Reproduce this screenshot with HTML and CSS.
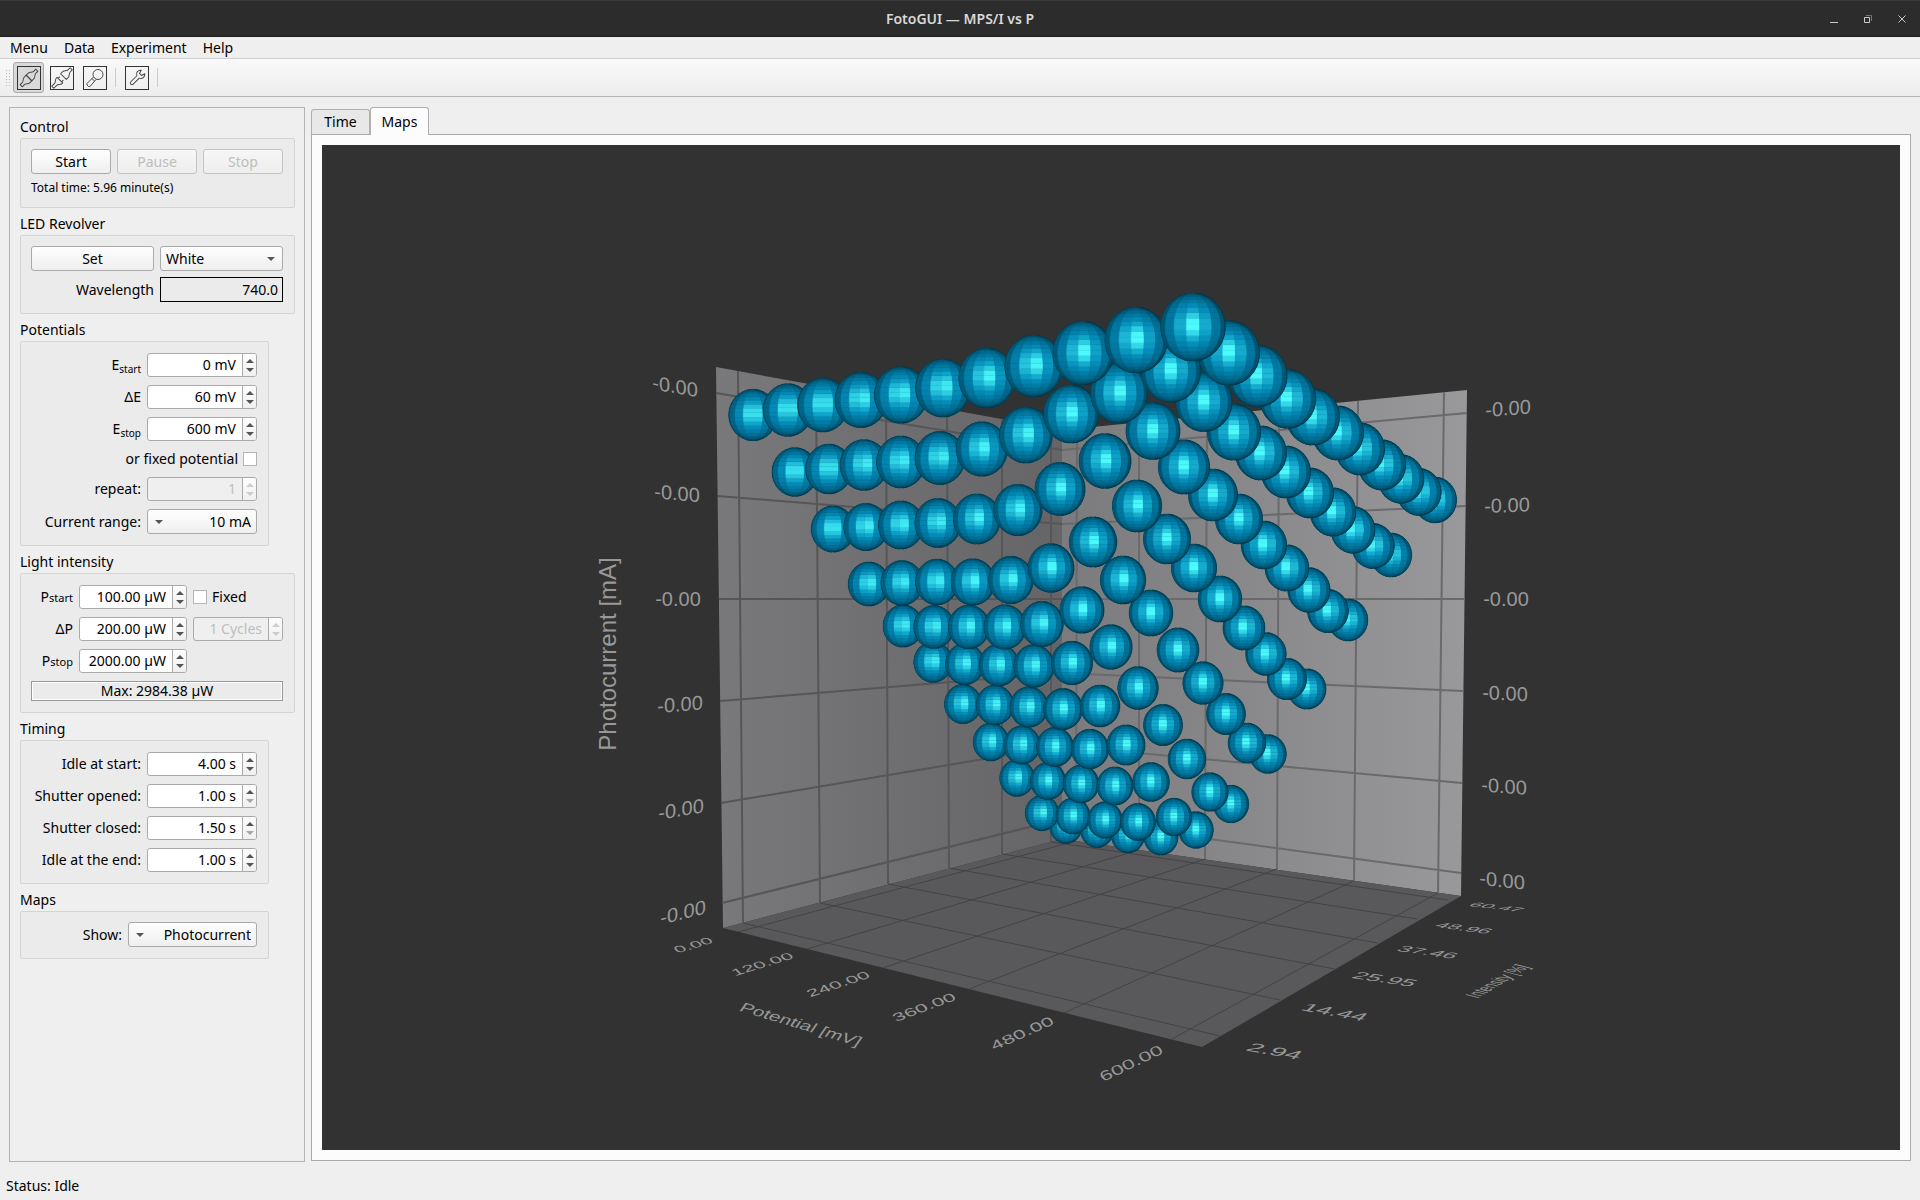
FILE: index.html
```html
<!DOCTYPE html>
<html lang="en">

<head>
    <meta charset="UTF-8">
    <meta name="viewport" content="width=device-width, initial-scale=1.0">
    <title>FotoGUI — MPS/I vs P</title>
    <link rel="stylesheet" href="styles.css">
</head>

<body>
    <header class="titlebar">
        <h1 class="titlebar-text">FotoGUI — MPS/I vs P</h1>
        <div class="window-buttons">
            <button type="button" aria-label="Minimize"><svg viewBox="0 0 10 10"><path d="M1 8.5h8" /></svg></button>
            <button type="button" aria-label="Restore"><svg viewBox="0 0 10 10"><path d="M1.5 3.5h5v5h-5z" /><path class="dim" d="M3 1.5h5.500v5.500" /></svg></button>
            <button type="button" aria-label="Close"><svg viewBox="0 0 10 10"><path d="M1.500 1.500l7 7M8.500 1.500l-7 7" /></svg></button>
        </div>
    </header>

    <nav class="menubar">
        <button type="button">Menu</button>
        <button type="button">Data</button>
        <button type="button">Experiment</button>
        <button type="button">Help</button>
    </nav>

    <div class="toolbar">
        <span class="handle"></span>
        <button type="button" class="tool checked" aria-label="Connect">
            <svg viewBox="0 0 24 24">
                <rect x="0.500" y="0.500" width="23" height="23" />
                <g class="glyph" transform="translate(12 12) rotate(-45)">
                    <path d="M0 -4H-3C-5 -4 -6 -1.500 -8 -1.500H-11V1.500H-8C-6 1.500 -5 4 -3 4H0z" />
                    <path d="M0 -4H3C5 -4 6 -1.500 8 -1.500H11V1.500H8C6 1.500 5 4 3 4H0z" />
                </g>
            </svg>
        </button>
        <button type="button" class="tool" aria-label="Disconnect">
            <svg viewBox="0 0 24 24">
                <rect x="0.500" y="0.500" width="23" height="23" />
                <g class="glyph" transform="translate(12 12) rotate(-45)">
                    <path d="M-3 -4H-4C-6 -4 -7 -1.500 -9 -1.500H-13V1.500H-9C-7 1.500 -6 4 -4 4H-3zM-3 -2.500H-0.500M-3 2.500H-0.500" />
                    <path d="M2 -4H5C7 -4 8 -1.500 10 -1.500H13V1.500H10C8 1.500 7 4 5 4H2z" />
                </g>
            </svg>
        </button>
        <button type="button" class="tool" aria-label="Find">
            <svg viewBox="0 0 24 24">
                <rect x="0.500" y="0.500" width="23" height="23" />
                <circle class="glyph" cx="15" cy="8.500" r="5" />
                <path class="glyph" d="M10.500 11l-6.500 6.500v1.500l1.500 1.500h1.500l6-7M9 12.500l2.500 2.500" />
            </svg>
        </button>
        <span class="divider"></span>
        <button type="button" class="tool" aria-label="Settings">
            <svg viewBox="0 0 24 24">
                <rect x="0.500" y="0.500" width="23" height="23" />
                <g class="glyph" transform="translate(12 12) rotate(-45)">
                    <path d="M1.500 -1.700H-7A1.700 1.700 0 0 0 -7 1.700H1.500A4 4 0 0 0 8.500 2.500L5 1.500V-1.500L8.500 -2.500A4 4 0 0 0 1.500 -1.700z" />
                </g>
            </svg>
        </button>
        <span class="divider"></span>
    </div>

    <main class="workspace">
        <form class="sidebar">
            <section class="group">
                <h2>Control</h2>
                <div class="group-box wide">
                    <div class="row">
                        <button type="button" class="btn">Start</button>
                        <button type="button" class="btn" disabled>Pause</button>
                        <button type="button" class="btn" disabled>Stop</button>
                    </div>
                    <p class="note">Total time: 5.96 minute(s)</p>
                </div>
            </section>

            <section class="group">
                <h2>LED Revolver</h2>
                <div class="group-box wide halves">
                    <button type="button" class="btn">Set</button>
                    <div class="combo">
                        <select aria-label="LED">
                            <option>White</option>
                        </select>
                    </div>
                    <label for="wavelength">Wavelength</label>
                    <input class="readout" id="wavelength" type="text" value="740.0" readonly>
                </div>
            </section>

            <section class="group">
                <h2>Potentials</h2>
                <div class="group-box fields">
                    <label for="e-start">E<sub>start</sub></label>
                    <div class="spin"><input id="e-start" type="text" value="0 mV"><span class="steps"><button type="button" aria-label="Up"></button><button type="button" aria-label="Down"></button></span></div>
                    <label for="e-delta">ΔE</label>
                    <div class="spin"><input id="e-delta" type="text" value="60 mV"><span class="steps"><button type="button" aria-label="Up"></button><button type="button" aria-label="Down"></button></span></div>
                    <label for="e-stop">E<sub>stop</sub></label>
                    <div class="spin"><input id="e-stop" type="text" value="600 mV"><span class="steps"><button type="button" aria-label="Up"></button><button type="button" aria-label="Down"></button></span></div>
                    <div class="check full">
                        <label for="fixed-potential">or fixed potential</label>
                        <input id="fixed-potential" type="checkbox">
                    </div>
                    <label for="repeat">repeat:</label>
                    <div class="spin off"><input id="repeat" type="text" value="1" disabled><span class="steps"><button type="button" aria-label="Up" disabled></button><button type="button" aria-label="Down" disabled></button></span></div>
                    <label for="range">Current range:</label>
                    <div class="combo reversed">
                        <select id="range">
                            <option>10 mA</option>
                        </select>
                    </div>
                </div>
            </section>

            <section class="group">
                <h2>Light intensity</h2>
                <div class="group-box wide light">
                    <label for="p-start">P<small>start</small></label>
                    <div class="spin"><input id="p-start" type="text" value="100.00 µW"><span class="steps"><button type="button" aria-label="Up"></button><button type="button" aria-label="Down"></button></span></div>
                    <div class="check">
                        <input id="fixed-light" type="checkbox">
                        <label for="fixed-light">Fixed</label>
                    </div>
                    <label for="p-delta">ΔP</label>
                    <div class="spin"><input id="p-delta" type="text" value="200.00 µW"><span class="steps"><button type="button" aria-label="Up"></button><button type="button" aria-label="Down"></button></span></div>
                    <div class="spin off"><input type="text" value="1 Cycles" aria-label="Cycles" disabled><span class="steps"><button type="button" aria-label="Up" disabled></button><button type="button" aria-label="Down" disabled></button></span></div>
                    <label for="p-stop">P<small>stop</small></label>
                    <div class="spin"><input id="p-stop" type="text" value="2000.00 µW"><span class="steps"><button type="button" aria-label="Up"></button><button type="button" aria-label="Down"></button></span></div>
                    <output class="max">Max: 2984.38 µW</output>
                </div>
            </section>

            <section class="group">
                <h2>Timing</h2>
                <div class="group-box fields">
                    <label for="idle-start">Idle at start:</label>
                    <div class="spin"><input id="idle-start" type="text" value="4.00 s"><span class="steps"><button type="button" aria-label="Up"></button><button type="button" aria-label="Down"></button></span></div>
                    <label for="opened">Shutter opened:</label>
                    <div class="spin"><input id="opened" type="text" value="1.00 s"><span class="steps"><button type="button" aria-label="Up"></button><button type="button" aria-label="Down" class="faded"></button></span></div>
                    <label for="closed">Shutter closed:</label>
                    <div class="spin"><input id="closed" type="text" value="1.50 s"><span class="steps"><button type="button" aria-label="Up"></button><button type="button" aria-label="Down" class="faded"></button></span></div>
                    <label for="idle-end">Idle at the end:</label>
                    <div class="spin"><input id="idle-end" type="text" value="1.00 s"><span class="steps"><button type="button" aria-label="Up"></button><button type="button" aria-label="Down"></button></span></div>
                </div>
            </section>

            <section class="group">
                <h2>Maps</h2>
                <div class="group-box show">
                    <label for="show">Show:</label>
                    <div class="combo reversed">
                        <select id="show">
                            <option>Photocurrent</option>
                        </select>
                    </div>
                </div>
            </section>
        </form>

        <section class="viewer">
            <div class="tabs" role="tablist">
                <button type="button" class="tab" role="tab" aria-selected="false">Time</button>
                <button type="button" class="tab active" role="tab" aria-selected="true">Maps</button>
            </div>
            <div class="pane">
                <svg class="scene" id="scene" viewBox="322 145 1578 1005">
                    <defs>
                        <linearGradient id="wall-left" x1="0" x2="1">
                            <stop offset="0" stop-color="#79797b" />
                            <stop offset="1" stop-color="#656567" />
                        </linearGradient>
                        <linearGradient id="wall-right" x1="0" x2="1">
                            <stop offset="0" stop-color="#7b7b7d" />
                            <stop offset="1" stop-color="#99999b" />
                        </linearGradient>
                        <g id="balls"></g>
                    </defs>
                    <polygon fill="url(#wall-left)" points="716,367 1062,430 1062,839 723,928" />
                    <polygon fill="url(#wall-right)" points="1062,430 1467,390 1461,896 1062,839" />
                    <polygon fill="#59595b" points="723,928 1062,839 1461,896 1202,1047" />
                    <path class="grid-left" d="M738 371L743 923M816 385L820 903M886 398L888 884M947 409L949 868M1002 419L1002 854M1051 428L1051 842
                        M716 393L1062 450M718 496L1062 524M719 599H1062M720 701L1062 673M721 803L1062 746M722 903L1062 819" />
                    <path class="grid-right" d="M1077 429L1076 841M1139 423L1139 850M1207 416L1205 859M1279 409L1277 869M1358 401L1354 881M1444 392L1438 893
                        M1062 450L1467 413M1062 524L1466 506M1062 599H1465M1062 673L1463 691M1062 746L1462 783M1062 819L1461 873" />
                    <path class="grid-floor" d="M743 923L1220 1036M820 903L1280 1000M888 884L1335 969M949 868L1378 943M1002 854L1417 919M1051 842L1448 900
                        M738 932L1076 841M807 949L1139 850M883 968L1205 859M969 989L1277 869M1064 1013L1354 881M1172 1039L1438 893" />
                    <g id="labels" class="labels"></g>
                    <g id="points"></g>
                </svg>
            </div>
        </section>
    </main>

    <footer class="statusbar">Status: Idle</footer>

    <script src="scene.js"></script>
</body>

</html>
```

FILE: styles.css
```css
* {
    margin: 0;
    padding: 0;
    box-sizing: border-box;
}

body {
    display: flex;
    flex-direction: column;
    min-height: 100vh;
    background-color: #efefef;
    color: #000;
    font-family: "Noto Sans", "Open Sans", sans-serif;
    font-size: 14px;
    line-height: 20px;
}

button,
input,
select {
    font: inherit;
    color: inherit;
}

/* Title bar */
.titlebar {
    display: grid;
    grid-template-columns: 1fr auto 1fr;
    align-items: center;
    height: 37px;
    background-color: #2c2c2c;
    border-top: 1px solid #3c3c3c;
    border-bottom: 1px solid #1c1c1c;
}

.titlebar-text {
    grid-column: 2;
    color: #d8d8d8;
    font-size: 14px;
    font-weight: 600;
}

.window-buttons {
    display: flex;
    justify-content: flex-end;
    gap: 14px;
    padding-right: 8px;
}

.window-buttons button {
    width: 20px;
    height: 20px;
    padding: 5px;
    border: none;
    background: none;
}

.window-buttons svg {
    display: block;
    width: 10px;
    height: 10px;
    fill: none;
    stroke: #ccc;
}

.window-buttons .dim {
    stroke: #777;
}

/* Menu */
.menubar {
    display: flex;
    gap: 16px;
    padding: 0 10px;
    height: 22px;
    border-bottom: 1px solid #d0d0d0;
}

.menubar button {
    border: none;
    background: none;
    line-height: 21px;
}

/* Toolbar */
.toolbar {
    display: flex;
    align-items: center;
    gap: 2px;
    height: 38px;
    padding-left: 5px;
    border-bottom: 1px solid #b4b4b4;
    background: linear-gradient(#f9f9f9, #ededed);
}

.handle {
    width: 6px;
    height: 17px;
    background: radial-gradient(circle, #bbb 1px, transparent 1px) 0 0 / 3px 3px;
}

.tool {
    width: 31px;
    height: 31px;
    padding: 3px;
    border: 1px solid transparent;
    border-radius: 3px;
    background: none;
}

.tool.checked {
    border-color: #aaa;
    background-color: #d9d9d9;
}

.tool svg {
    display: block;
    width: 24px;
    height: 24px;
    fill: none;
    stroke: #333;
}

.tool .glyph {
    stroke: #4a4a4a;
    stroke-linejoin: round;
}

.divider {
    width: 1px;
    height: 19px;
    margin: 0 3px;
    background-color: #ccc;
}

/* Layout */
.workspace {
    display: flex;
    flex: 1;
    gap: 6px;
    padding: 10px 9px 0;
}

.sidebar {
    flex: none;
    width: 296px;
    padding: 8px 9px 8px 10px;
    border: 1px solid #b4b4b4;
}

.group {
    margin-bottom: 5px;
}

.group h2 {
    font-size: 14px;
    font-weight: normal;
    line-height: 22px;
}

.group-box {
    width: 249px;
    padding: 11px;
    border: 1px solid #d4d4d4;
    border-radius: 2px;
    background-color: #ebebeb;
}

.group-box.wide {
    width: 275px;
    padding: 10px 11px 11px 10px;
}

.row {
    display: flex;
    gap: 6px;
}

.row .btn {
    flex: 1;
}

.note {
    margin-top: 6px;
    font-size: 12px;
    line-height: 16px;
}

.halves {
    display: grid;
    grid-template-columns: 1fr 1fr;
    align-items: center;
    gap: 6px;
}

.group-box label {
    text-align: right;
    line-height: 20px;
    white-space: nowrap;
}

.fields {
    display: grid;
    grid-template-columns: 1fr 110px;
    align-items: center;
    gap: 8px 6px;
}

.full {
    grid-column: 1 / -1;
    justify-content: flex-end;
}

.group-box.light {
    display: grid;
    grid-template-columns: 42px 108px 1fr;
    align-items: center;
    gap: 8px 6px;
    padding-top: 11px;
}

.max {
    grid-column: 1 / -1;
    height: 20px;
    border: 1px solid #999;
    outline: 1px solid #fff;
    outline-offset: -2px;
    line-height: 18px;
    text-align: center;
}

.group-box.show {
    display: grid;
    grid-template-columns: 1fr 129px;
    align-items: center;
    gap: 6px;
    padding-top: 10px;
}

sub {
    font-size: 10px;
    line-height: 0;
    vertical-align: -3px;
}

small {
    font-size: 11px;
}

/* Controls */
.btn {
    height: 25px;
    border: 1px solid #aaa;
    border-radius: 3px;
    background: linear-gradient(#fefefe, #efefef);
    line-height: 23px;
}

.btn:disabled {
    border-color: #c4c4c4;
    background: linear-gradient(#f6f6f6, #eee);
    color: #bebebe;
}

.combo {
    position: relative;
    height: 25px;
}

.combo select {
    display: block;
    width: 100%;
    height: 25px;
    padding: 0 5px;
    border: 1px solid #aaa;
    border-radius: 3px;
    background: linear-gradient(#fefefe, #efefef);
    appearance: none;
}

.combo::after {
    content: "";
    position: absolute;
    top: 11px;
    right: 8px;
    border: 4px solid transparent;
    border-top-color: #555;
    border-bottom: none;
    pointer-events: none;
}

.combo.reversed::after {
    right: auto;
    left: 8px;
}

.combo.reversed select {
    text-align-last: right;
}

.readout {
    width: 100%;
    height: 25px;
    padding: 0 4px;
    border: 1px solid #000;
    background-color: #ebebeb;
    text-align: right;
}

.spin {
    display: flex;
    height: 24px;
    border: 1px solid #aaa;
    border-radius: 3px;
    background-color: #fff;
    overflow: hidden;
}

.spin input {
    flex: 1;
    min-width: 0;
    padding-right: 6px;
    border: none;
    background: none;
    text-align: right;
}

.steps {
    display: flex;
    flex-direction: column;
    justify-content: center;
    gap: 5px;
    width: 14px;
    border-left: 1px solid #aaa;
    background: linear-gradient(#fdfdfd, #f0f0f0);
}

.steps button {
    align-self: center;
    width: 8px;
    height: 4px;
    border: 4px solid transparent;
    border-top-width: 0;
    border-bottom-color: #555;
    background: none;
}

.steps button:last-child {
    border-width: 4px 4px 0;
    border-top-color: #555;
}

.steps .faded {
    opacity: 0.5;
}

.spin.off {
    background-color: #efefef;
    color: #bebebe;
}

.spin.off .steps button {
    opacity: 0.25;
}

.check {
    display: flex;
    align-items: center;
    gap: 5px;
    height: 20px;
}

.check input {
    width: 14px;
    height: 14px;
    border: 1px solid #b4b4b4;
    background-color: #fff;
    appearance: none;
}

/* Tabs and the 3D map */
.viewer {
    display: flex;
    flex: 1;
    flex-direction: column;
    min-width: 0;
    margin-bottom: 1px;
}

.tabs {
    display: flex;
    align-items: flex-end;
    height: 27px;
}

.tab {
    width: 59px;
    height: 25px;
    border: 1px solid #b0b0b0;
    border-bottom: none;
    border-radius: 3px 3px 0 0;
    background-color: #e8e8e8;
}

.tab.active {
    z-index: 1;
    height: 28px;
    margin-bottom: -1px;
    background-color: #fcfcfc;
}

.pane {
    display: flex;
    flex: 1;
    padding: 10px;
    border: 1px solid #aaa;
    background-color: #fcfcfc;
}

.scene {
    flex: 1;
    width: 100%;
    min-width: 0;
    background-color: #323232;
}

.grid-left,
.grid-right,
.grid-floor {
    fill: none;
    stroke: #565658;
    stroke-width: 2;
}

.grid-right {
    stroke: #6a6a6c;
}

.grid-floor {
    stroke: #444446;
    stroke-width: 1;
}

.labels {
    fill: #989898;
    font-family: "Liberation Sans", Arial, sans-serif;
    font-size: 20px;
    text-anchor: middle;
}

.labels .axis-title {
    font-size: 24px;
}

/* Status bar */
.statusbar {
    height: 39px;
    padding: 14px 6px 5px;
}
```

FILE: scene.js
```js
const SVG = 'http://www.w3.org/2000/svg';

// Sphere centres, one line per light intensity, start to stop potential
const points = [
    [[753, 415], [788, 410], [823, 405], [861, 400], [901, 395], [943, 388], [987, 378], [1034, 366], [1083, 353], [1136, 340], [1193, 327]],
    [[795, 472], [829, 469], [864, 465], [901, 462], [940, 458], [982, 449], [1026, 435], [1071, 414], [1119, 393], [1171, 371], [1229, 353]],
    [[833, 529], [866, 527], [901, 525], [938, 523], [977, 519], [1018, 510], [1060, 489], [1105, 461], [1153, 431], [1204, 402], [1258, 376]],
    [[869, 584], [902, 583], [937, 582], [973, 582], [1011, 580], [1051, 568], [1093, 542], [1137, 506], [1184, 467], [1234, 432], [1288, 399]],
    [[903, 626], [934, 627], [969, 627], [1005, 627], [1042, 624], [1082, 610], [1123, 580], [1167, 539], [1213, 495], [1261, 453], [1313, 417]],
    [[933, 662], [965, 664], [999, 665], [1034, 666], [1072, 663], [1111, 647], [1151, 613], [1194, 568], [1239, 519], [1286, 472], [1338, 433]],
    [[963, 704], [995, 705], [1029, 707], [1063, 709], [1100, 706], [1138, 688], [1178, 650], [1220, 599], [1264, 545], [1310, 493], [1360, 449]],
    [[991, 742], [1022, 745], [1055, 747], [1090, 749], [1126, 745], [1163, 725], [1203, 683], [1244, 628], [1287, 568], [1333, 512], [1382, 465]],
    [[1017, 778], [1048, 781], [1081, 784], [1115, 786], [1151, 782], [1187, 759], [1226, 714], [1266, 654], [1309, 590], [1353, 530], [1401, 479]],
    [[1042, 813], [1073, 816], [1105, 820], [1138, 822], [1174, 817], [1210, 792], [1247, 743], [1287, 679], [1328, 611], [1373, 546], [1419, 492]],
    [[1066, 826], [1097, 830], [1128, 835], [1161, 837], [1196, 830], [1231, 804], [1268, 754], [1307, 689], [1348, 620], [1391, 555], [1435, 500]]
];

// text, matrix
const labels = [
    ['0.00', [0.95, -0.28, 0.4, 0.4, 693, 945]],
    ['120.00', [0.98, -0.3, 0.4, 0.42, 762, 964]],
    ['240.00', [1, -0.33, 0.4, 0.45, 838, 984]],
    ['360.00', [1, -0.37, 0.4, 0.5, 924, 1007]],
    ['480.00', [1, -0.44, 0.4, 0.55, 1022, 1033]],
    ['600.00', [1, -0.48, 0.4, 0.6, 1131, 1063]],
    ['2.94', [1.35, 0.24, -0.55, 0.55, 1275, 1051]],
    ['14.44', [1.25, 0.22, -0.55, 0.5, 1335, 1012]],
    ['25.95', [1.22, 0.18, -0.55, 0.45, 1385, 979]],
    ['37.46', [1.15, 0.16, -0.55, 0.38, 1428, 952]],
    ['48.96', [1.08, 0.14, -0.55, 0.32, 1464, 928]],
    ['60.47', [1.03, 0.12, -0.55, 0.26, 1497, 907]],
    ['Potential [mV]', [0.8, 0.24, -0.35, 0.5, 801, 1024], 'axis-title'],
    ['Intensity [%]', [0.4, -0.24, 0.8, 0.2, 1497, 981], 'axis-title'],
    ['Photocurrent [mA]', [0, -1, 1, 0, 607, 654], 'axis-title']
];

[[675, 386], [677, 493], [678, 599], [680, 704], [681, 809], [683, 912]].forEach(([x, y]) => {
    labels.push(['-0.00', [1, (599 - y) * 0.0008, 0, 1, x, y]]);
});
[[1508, 408], [1507, 505], [1506, 599], [1505, 693], [1504, 786], [1502, 880]].forEach(([x, y]) => {
    labels.push(['-0.00', [1, (y - 599) * 0.0004, 0, 1, x, y]]);
});

function add(parent, name, attrs) {
    const node = document.createElementNS(SVG, name);
    Object.keys(attrs).forEach(key => node.setAttribute(key, attrs[key]));
    parent.appendChild(node);
    return node;
}

const labelLayer = document.getElementById('labels');
labels.forEach(([text, matrix, cls]) => {
    const node = add(labelLayer, 'text', { transform: `matrix(${matrix.join(' ')})`, dy: '0.36em' });
    if (cls) node.setAttribute('class', cls);
    node.textContent = text;
});

// Colour of a facet whose normal points toward the viewer by nz
function shade(nz) {
    const k = 0.36 + 0.64 * nz;
    const s = Math.pow(nz, 14);
    return `rgb(${Math.round(80 * s)},${Math.round(152 * k + 103 * s)},${Math.round(204 * k + 51 * s)})`;
}

// A unit sphere of flat facets, turned by yaw degrees
const made = {};
function ball(yaw) {
    const id = 'ball' + yaw;
    if (made[id]) return id;
    made[id] = true;
    const rad = Math.PI / 180;
    const clamp = v => Math.max(-90, Math.min(90, v));
    const g = add(document.getElementById('balls'), 'g', { id: id });
    add(g, 'circle', { r: 1, fill: shade(0.05) });
    for (let lon = -96; lon <= 96; lon += 24) {
        const l0 = clamp(lon - 12 + yaw);
        const l1 = clamp(lon + 12 + yaw);
        if (l0 === l1) continue;
        for (let lat = -85; lat < 85; lat += 10) {
            const corner = (la, lo) => `${(Math.cos(la * rad) * Math.sin(lo * rad)).toFixed(3)},${(-Math.sin(la * rad)).toFixed(3)}`;
            const nz = Math.cos((lat + 5 - 4) * rad) * Math.cos((l0 + l1) / 2 * rad);
            const fill = shade(Math.max(0, nz));
            add(g, 'polygon', {
                points: [corner(lat, l0), corner(lat + 10, l0), corner(lat + 10, l1), corner(lat, l1)].join(' '),
                fill: fill,
                stroke: fill,
                'stroke-width': 0.015
            });
        }
    }
    return id;
}

// Painted far to near
const pointLayer = document.getElementById('points');
const spheres = [];
points.forEach((line, row) => {
    line.forEach(([x, y], col) => {
        const r = 1 / (0.0233 + 0.000785 * (10 - col) + 0.00112 * row + 0.0000188 * y);
        spheres.push({ x, y, r });
    });
});
spheres.sort((a, b) => a.r - b.r).forEach(({ x, y, r }) => {
    const yaw = Math.round((1193 - x) * 0.03 / 3) * 3;
    add(pointLayer, 'use', {
        href: '#' + ball(yaw),
        transform: `translate(${x} ${y}) scale(${(r * 0.95).toFixed(2)} ${r.toFixed(2)})`
    });
});
```
